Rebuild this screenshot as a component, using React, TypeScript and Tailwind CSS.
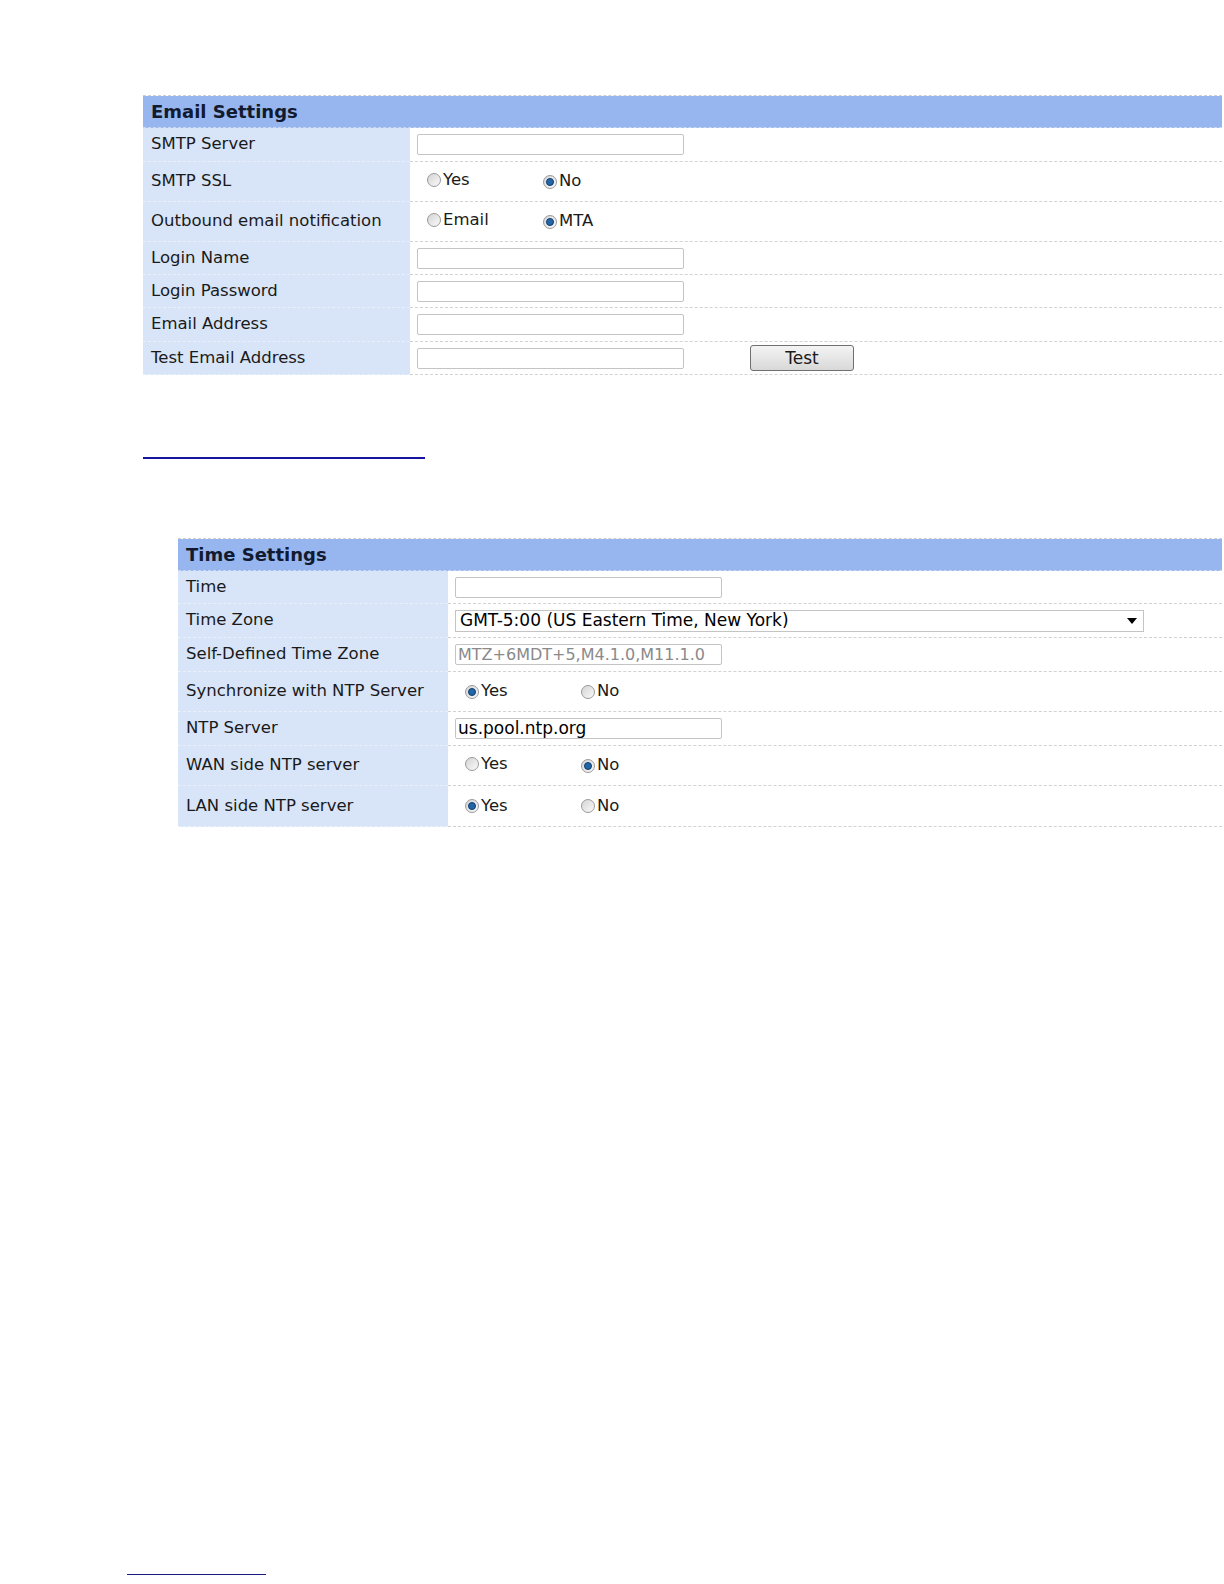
import React from "react";

const font = { fontFamily: '"DejaVu Sans", Verdana, sans-serif' };

const Radio = ({ checked, label }: { checked?: boolean; label: string }) => (
  <span className="inline-flex items-center">
    <span className="w-[14px] h-[14px] rounded-full border border-[#9a9a9a] bg-gradient-to-br from-[#d4d4d4] to-[#fafafa] flex items-center justify-center">
      {checked && <span className="w-[8px] h-[8px] rounded-full bg-[#2266a8] border border-[#0c3d6e]" />}
    </span>
    <span className="ml-[2px]">{label}</span>
  </span>
);

const RadioPair = ({ a, b, which }: { a: string; b: string; which: 0 | 1 }) => (
  <div className="flex items-center pl-[10px]">
    <div className="w-[116px]">
      <Radio label={a} checked={which === 0} />
    </div>
    <Radio label={b} checked={which === 1} />
  </div>
);

const Input = ({ value, gray, size = "text-[17px]" }: { value?: string; gray?: boolean; size?: string }) => (
  <div
    className={`w-[267px] h-[21px] border border-[#c4c4c4] rounded-[2px] bg-white px-[2px] leading-[19px] whitespace-nowrap overflow-hidden ${size} ${
      gray ? "text-[#8a8a8a]" : "text-black"
    }`}
  >
    {value}
  </div>
);

type Row = { label: string; h: string; value: React.ReactNode };

const Table = ({ title, rows, labelW }: { title: string; rows: Row[]; labelW: string }) => (
  <div className="w-full border-t border-dashed border-[#cfcfcf]">
    <div className="h-[32px] bg-[#97b5ee] flex items-center px-[8px] font-bold text-[18px] text-[#111a2e] border-b border-dashed border-[#c9d7f0]">
      {title}
    </div>
    {rows.map((r) => (
      <div key={r.label} className={`flex ${r.h}`}>
        <div className={`${labelW} shrink-0 bg-[#d8e4f8] px-[8px] flex items-center border-b border-dashed border-[#eaf0fa] whitespace-nowrap`}>
          {r.label}
        </div>
        <div className="flex-1 flex items-center pl-[7px] border-b border-dashed border-[#d2d2d2]">{r.value}</div>
      </div>
    ))}
  </div>
);

export default function App() {
  const emailRows: Row[] = [
    { label: "SMTP Server", h: "h-[34px]", value: <Input /> },
    { label: "SMTP SSL", h: "h-[40px]", value: <RadioPair a="Yes" b="No" which={1} /> },
    { label: "Outbound email notification", h: "h-[40px]", value: <RadioPair a="Email" b="MTA" which={1} /> },
    { label: "Login Name", h: "h-[33px]", value: <Input /> },
    { label: "Login Password", h: "h-[33px]", value: <Input /> },
    { label: "Email Address", h: "h-[34px]", value: <Input /> },
    {
      label: "Test Email Address",
      h: "h-[33px]",
      value: (
        <div className="flex items-center">
          <Input />
          <button className="ml-[66px] w-[104px] h-[26px] rounded-[3px] border border-[#707070] bg-gradient-to-b from-[#f4f4f4] to-[#d8d8d8] text-[17px] leading-none">
            Test
          </button>
        </div>
      ),
    },
  ];

  const timeRows: Row[] = [
    { label: "Time", h: "h-[33px]", value: <Input /> },
    {
      label: "Time Zone",
      h: "h-[34px]",
      value: (
        <div className="w-[689px] h-[22px] border border-[#c4c4c4] bg-white flex items-center justify-between pl-[4px] pr-[6px] text-[17px] text-black">
          <span>GMT-5:00 (US Eastern Time, New York)</span>
          <svg width="10" height="6" viewBox="0 0 10 6">
            <path d="M0 0h10L5 6z" fill="#000" />
          </svg>
        </div>
      ),
    },
    { label: "Self-Defined Time Zone", h: "h-[34px]", value: <Input gray size="text-[16px]" value="MTZ+6MDT+5,M4.1.0,M11.1.0" /> },
    { label: "Synchronize with NTP Server", h: "h-[40px]", value: <RadioPair a="Yes" b="No" which={0} /> },
    { label: "NTP Server", h: "h-[34px]", value: <Input value="us.pool.ntp.org" /> },
    { label: "WAN side NTP server", h: "h-[40px]", value: <RadioPair a="Yes" b="No" which={1} /> },
    { label: "LAN side NTP server", h: "h-[41px]", value: <RadioPair a="Yes" b="No" which={0} /> },
  ];

  return (
    <div className="w-[1224px] h-[1584px] bg-white text-[16.5px] text-[#1a1a1a] relative" style={font}>
      <div className="pt-[95px] pl-[143px] pr-[2px]">
        <Table title="Email Settings" rows={emailRows} labelW="w-[267px]" />
      </div>
      <div className="pl-[143px] mt-[82px]">
        <div className="w-[282px] h-[2px] bg-[#1414a0]" />
      </div>
      <div className="pl-[178px] pr-[2px] mt-[79px]">
        <Table title="Time Settings" rows={timeRows} labelW="w-[270px]" />
      </div>
      <div className="absolute left-[127px] top-[1574px] w-[139px] h-[1px] bg-[#1a1a80]" />
    </div>
  );
}
